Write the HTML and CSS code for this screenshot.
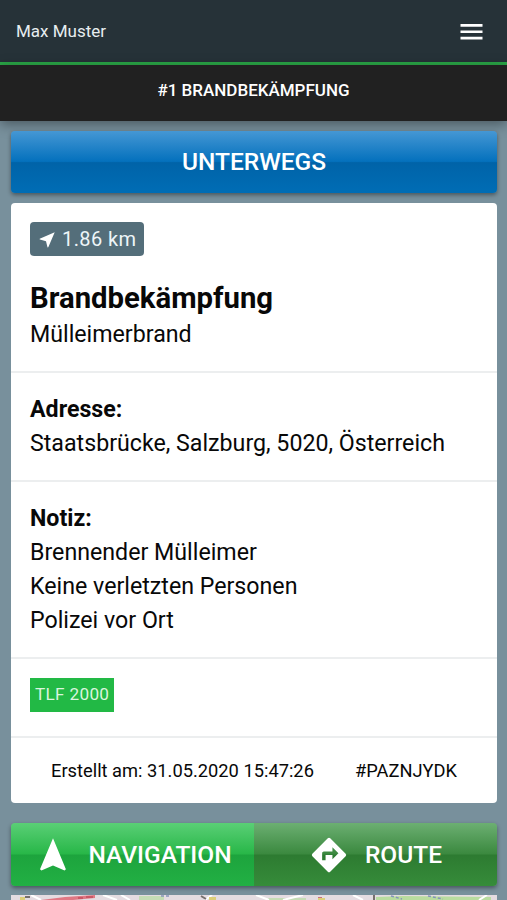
FILE: index.html
```html
<!DOCTYPE html>
<html lang="de">
<head>
<meta charset="utf-8">
<title>Brandbekämpfung</title>
<link rel="stylesheet" href="styles.css">
</head>
<body>
<header class="topbar">
  <span class="user">Max Muster</span>
  <svg class="menu" viewBox="0 0 22 16"><path d="M0 0h22v2.700H0zM0 6.400h22v2.700H0zM0 12.800h22v2.700H0z"/></svg>
</header>
<nav class="tab"><span class="label tab-label">#1 BRANDBEKÄMPFUNG</span></nav>
<main>
  <button class="btn status"><span class="label">UNTERWEGS</span></button>
  <article class="card">
    <section class="summary">
      <div class="distance">
        <svg class="arrow" viewBox="0 0 16 16"><path d="M15.700.2.700 6.700Q.3 7.300 1 7.600L7 9.200 8.500 15.200Q9 15.700 9.400 15z"/></svg>
        <span class="label distance-label">1.86 km</span>
      </div>
      <h1>Brandbekämpfung</h1>
      <p>Mülleimerbrand</p>
    </section>
    <section class="address">
      <h2>Adresse:</h2>
      <p>Staatsbrücke, Salzburg, 5020, Österreich</p>
    </section>
    <section class="note">
      <h2>Notiz:</h2>
      <p>Brennender Mülleimer</p>
      <p>Keine verletzten Personen</p>
      <p>Polizei vor Ort</p>
    </section>
    <section class="units"><span class="unit">TLF 2000</span></section>
    <footer class="meta">
      <span class="label">Erstellt am: 31.05.2020 15:47:26</span>
      <span class="label">#PAZNJYDK</span>
    </footer>
  </article>
  <div class="actions">
    <button class="btn navigate">
      <svg class="nav-icon" viewBox="0 0 26 32.400"><path d="M13 0 25.900 31 24.600 32.200 13 27.300 1.400 32.200 0 31z"/></svg>
      <span class="label">NAVIGATION</span>
    </button>
    <button class="btn route">
      <svg class="route-icon" viewBox="1.500 1.500 21 21"><path d="M21.710 11.290l-9-9a.996.996 0 0 0-1.410 0l-9 9a.996.996 0 0 0 0 1.410l9 9c.39.39 1.020.39 1.410 0l9-9a.996.996 0 0 0 0-1.410zM14 14.500V12h-4v3H8v-4c0-.55.45-1 1-1h5V7.500l3.500 3.500z"/></svg>
      <span class="label">ROUTE</span>
    </button>
  </div>
  <svg class="map" viewBox="0 0 486 5" preserveAspectRatio="none">
    <path fill="#e4dce1" d="M0 0h486v5H0z"/>
    <path fill="#e07884" d="M30 5 54 2 84 0v3L62 5z"/>
    <path fill="#c5dcb5" d="M128 1h25v4h-25zM257 3h38v2h-38z"/>
    <path fill="#b9dc9f" d="M365 2l27-1 88 1v3H365z"/>
    <path fill="none" stroke="#fff" stroke-width="2" d="m20 0 10 5M92 0l14 5M110 0l9 5M194 5l7-5M245 0l13 5M272 5l20-5M342 0l10 5M468 5l8-5"/>
    <path fill="none" stroke="#8694ba" stroke-width="1.500" stroke-dasharray="3 2" d="M150 1h8M380 1l11 3M417 1l15 3"/>
    <path fill="none" stroke="#c34e5c" stroke-width="1.500" d="M67 3h5M75 2h7M307 3h4"/>
    <path fill="#ddcf79" d="M9 2h5v3H9zM198 2h7v3h-7zM307 3h7v2h-7z"/>
    <path fill="none" stroke="#77706d" stroke-width="2" d="M14 2h5M190 1l5 3M363 0v5"/>
  </svg>
</main>
</body>
</html>
```
FILE: styles.css
```css
* { box-sizing: border-box; }
body {
  margin: 0;
  height: 900px;
  overflow: hidden;
  background: #78909c;
  color: #080808;
  font-family: Roboto, sans-serif;
}
h1, h2, p { margin: 0; }
svg { flex: none; display: block; fill: #fff; }
.label { white-space: nowrap; }
.topbar {
  height: 65px;
  padding: 1px 24px 0 16px;
  display: flex;
  align-items: center;
  justify-content: space-between;
  background: #263238;
  border-bottom: 3px solid #2ba747;
}
.user { padding-bottom: 2px; font-size: 17px; color: #e7edf0; }
.menu { width: 23px; height: 16px; }
.tab {
  height: 56px;
  padding-bottom: 6px;
  display: flex;
  align-items: center;
  justify-content: center;
  background: #212121;
  box-shadow: 0 3px 12px rgba(0, 0, 0, .4);
}
.tab-label { font-size: 17px; font-weight: 500; color: #fff; }
main { padding: 10px 10px 0 11px; }
.btn {
  display: flex;
  align-items: center;
  justify-content: center;
  border: 0;
  padding: 0;
  height: 62px;
  color: #fff;
  font: 500 24.500px Roboto, sans-serif;
}
.status {
  width: 100%;
  padding-bottom: 2px;
  border-radius: 4px;
  background: linear-gradient(#4597d4, #0471bd 49%, #0063a8 51%, #006db5);
  box-shadow: 0 2px 4px rgba(0, 0, 0, .4);
}
.card { margin-top: 10px; height: 600px; border-radius: 4px; background: #fff; }
.card section { padding: 0 19px; border-bottom: 2px solid #eceeef; }
.card p, .card h2 { font-size: 23.200px; line-height: 34px; white-space: nowrap; }
.card h2 { font-weight: 700; }
.card .summary { height: 169.500px; padding-top: 19px; }
.distance {
  display: flex;
  align-items: center;
  gap: 7px;
  width: 114px;
  height: 34px;
  padding-left: 9px;
  border-radius: 4px;
  background: #546e7a;
}
.arrow { width: 16px; height: 16px; margin-top: 2px; }
.distance-label { font-size: 20px; letter-spacing: .4px; color: #edf5f8; }
h1 { margin-top: 24px; font-size: 29.300px; line-height: 37px; }
.card .address { height: 109px; padding-top: 19.500px; }
.card .note { height: 177px; padding-top: 19.500px; }
.card .units { height: 79.500px; padding-top: 19.500px; }
.unit {
  display: block;
  width: 84px;
  height: 34px;
  padding-left: 5px;
  background: #22b945;
  color: #daf5df;
  font-size: 17.200px;
  line-height: 32px;
  letter-spacing: .3px;
  white-space: nowrap;
}
.meta {
  height: 65px;
  padding: 0 40px;
  display: flex;
  align-items: center;
  justify-content: space-between;
  font-size: 18.300px;
}
.actions {
  display: flex;
  height: 63px;
  margin-top: 20px;
  border-radius: 4px;
  overflow: hidden;
  box-shadow: 0 2px 4px rgba(0, 0, 0, .4);
}
.actions .btn { height: 63px; }
.navigate {
  width: 243px;
  gap: 22px;
  padding-left: 7px;
  background: linear-gradient(#5acf76, #28b748 49%, #1da43d 51%, #22b044);
}
.route {
  width: 243px;
  gap: 18px;
  padding-left: 2px;
  background: linear-gradient(#6caf72, #3b893f 49%, #2d7b31 51%, #368c3a);
}
.nav-icon { width: 26px; height: 33px; }
.route-icon { width: 36px; height: 36px; }
.map { width: 100%; height: 5px; margin-top: 9px; }
```
